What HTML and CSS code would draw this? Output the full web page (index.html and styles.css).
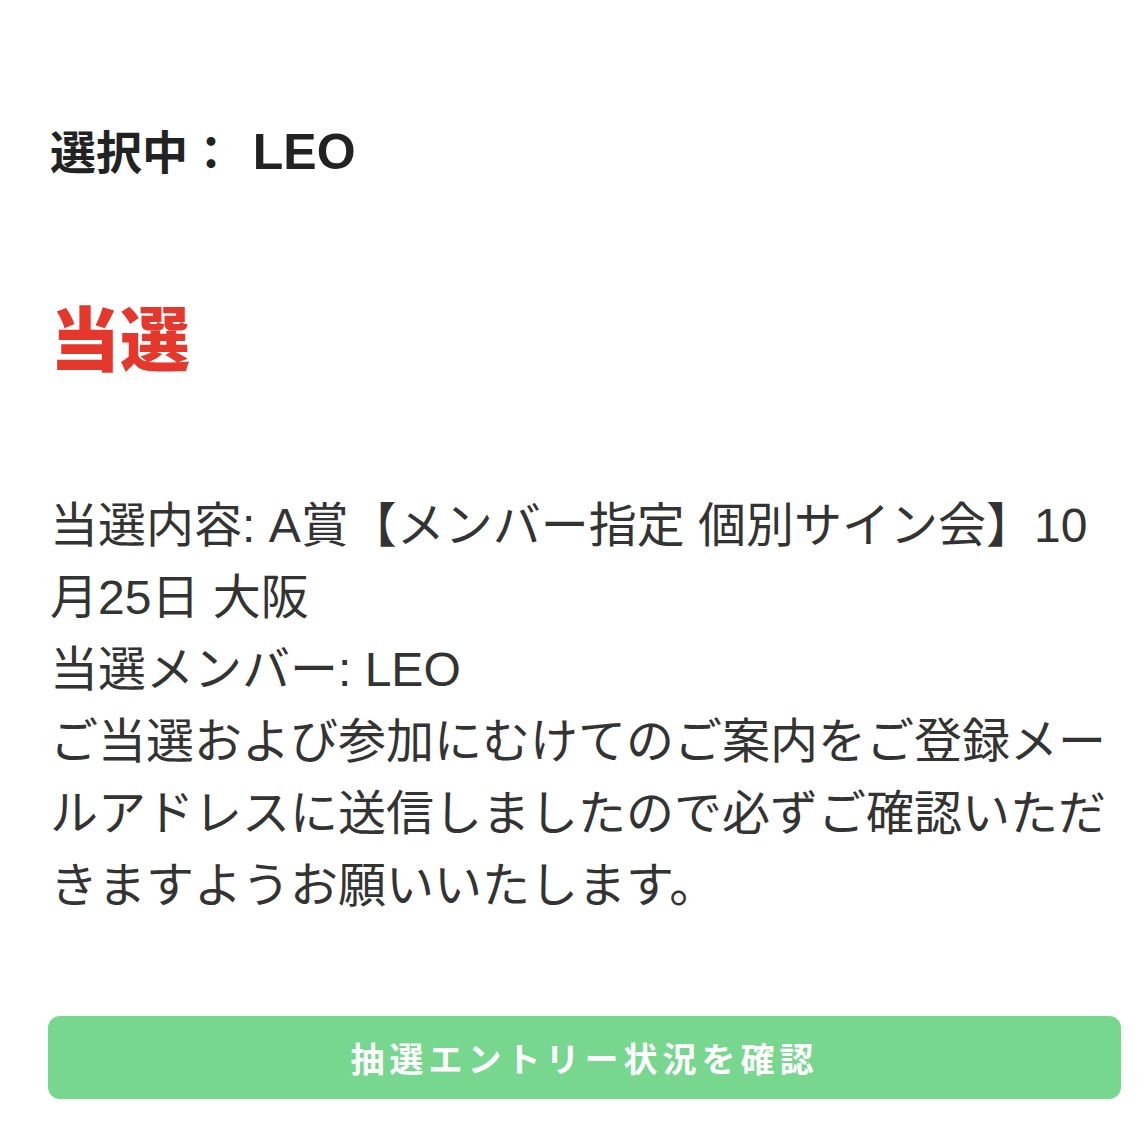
FILE: index.html
```html
<!DOCTYPE html>
<html lang="ja">
<head>
<meta charset="utf-8">
<link rel="stylesheet" href="styles.css">
</head>
<body>
<main class="page">
  <h2 class="selected">選択中： <span class="name">LEO</span></h2>
  <h1 class="result">当選</h1>
  <p class="detail">当選内容: A賞【メンバー指定 個別サイン会】10月25日 大阪<br>当選メンバー: LEO<br>ご当選および参加にむけてのご案内をご登録メールアドレスに送信しましたので必ずご確認いただきますようお願いいたします。</p>
  <a class="button" href="#">抽選エントリー状況を確認</a>
</main>
</body>
</html>
```
FILE: styles.css
```css
html, body {
  margin: 0;
  padding: 0;
  background: #ffffff;
}
body {
  font-family: "Liberation Sans", "Noto Sans CJK JP", sans-serif;
  color: #333333;
}
.page {
  width: 1073px;
  margin-left: 48px;
  padding-top: 118px;
}
.selected {
  margin: 0 0 0 2px;
  font-size: 46px;
  line-height: 69px;
  font-weight: 700;
  color: #222222;
}
.name {
  margin-left: 6px;
  font-size: 50px;
}
.result {
  margin: 106px 0 0 2px;
  font-size: 70px;
  line-height: 84px;
  font-weight: 900;
  color: #e5372b;
  font-family: "Noto Sans CJK JP", sans-serif;
}
.detail {
  margin: 112px 0 0 2px;
  font-size: 48px;
  line-height: 72px;
  font-weight: 400;
  color: #333333;
}
.button {
  display: flex;
  align-items: center;
  justify-content: center;
  margin-top: 94px;
  height: 83px;
  border-radius: 12px;
  background: #77d78f;
  color: #ffffff;
  font-family: "Noto Sans CJK JP", sans-serif;
  font-size: 34px;
  font-weight: 700;
  letter-spacing: 5px;
  text-decoration: none;
}
```
